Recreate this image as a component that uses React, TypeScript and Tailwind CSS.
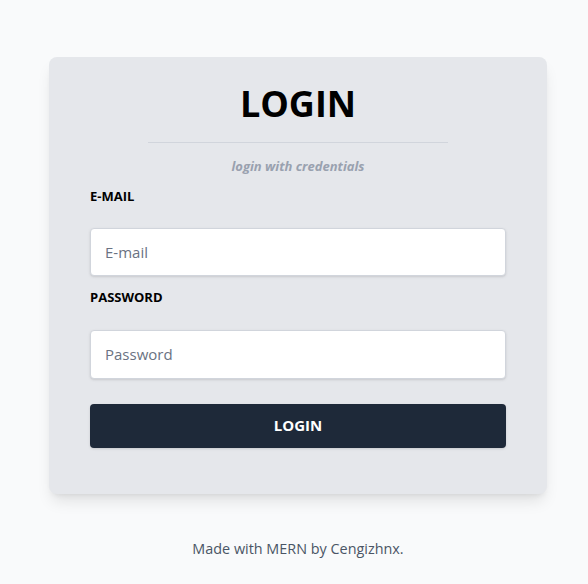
import React from 'react';

const App: React.FC = () => {
  return (
    <div className="min-h-screen bg-gray-50 flex flex-col items-center pt-[57px] pl-[8px]" style={{ fontFamily: '"Open Sans", "Noto Sans", sans-serif' }}>
      <div className="w-[498px] bg-gray-200 rounded-lg shadow-lg px-[41px] pt-[25px] pb-[46px]">
        <h1 className="text-center text-[36px] leading-[44px] font-bold text-black">LOGIN</h1>
        <div className="mx-auto mt-[16px] w-[300px] border-t border-gray-300" />
        <p className="text-center mt-[14px] text-[13px] font-bold italic text-gray-400">login with credentials</p>

        <form className="mt-[10px]" onSubmit={(e) => e.preventDefault()}>
          <label className="block text-[13px] font-bold text-black uppercase">E-mail</label>
          <input
            type="email"
            placeholder="E-mail"
            className="mt-[22px] w-full h-[48px] px-[14px] bg-white rounded border border-gray-300 shadow text-[15px] placeholder-gray-500 outline-none"
          />
          <label className="block mt-[12px] text-[13px] font-bold text-black uppercase">Password</label>
          <input
            type="password"
            placeholder="Password"
            className="mt-[22px] w-full h-[49px] px-[14px] bg-white rounded border border-gray-300 shadow text-[15px] placeholder-gray-500 outline-none"
          />
          <button
            type="submit"
            className="mt-[25px] w-full h-[44px] bg-gray-800 text-white rounded text-[15px] font-bold shadow"
          >
            LOGIN
          </button>
        </form>
      </div>
      <p className="mt-[44px] text-[14.4px] text-gray-600">Made with MERN by Cengizhnx.</p>
    </div>
  );
};

export default App;
